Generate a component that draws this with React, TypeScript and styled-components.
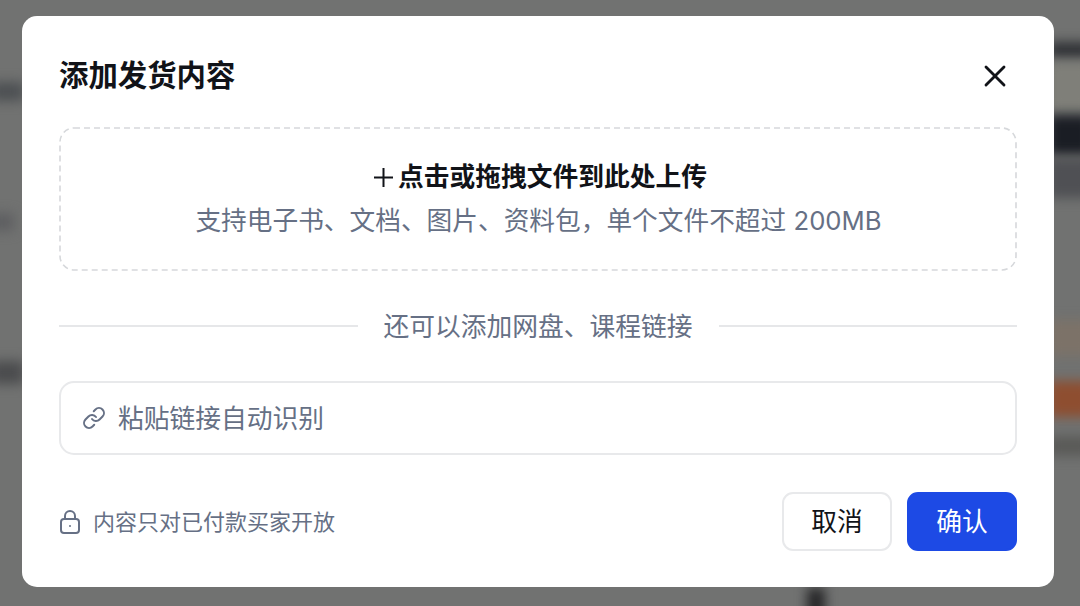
import React from "react";
import styled, { createGlobalStyle } from "styled-components";
import { Link, X } from "lucide-react";

const GlobalStyle = createGlobalStyle`
  html, body {
    margin: 0;
    padding: 0;
    height: 100%;
    overflow: hidden;
  }
  body {
    font-family: "Inter", "Noto Sans CJK SC", sans-serif;
  }
`;

const Page = styled.div`
  position: relative;
  width: 1080px;
  height: 606px;
  box-sizing: border-box;
  padding: 16px 26px 19px 22px;
  background: #717271;
  overflow: hidden;
`;

// blurred page behind the dialog
const Blob = styled.div<{ $x: number; $y: number; $w: number; $h: number; $c: string }>`
  position: absolute;
  left: ${(p) => p.$x}px;
  top: ${(p) => p.$y}px;
  width: ${(p) => p.$w}px;
  height: ${(p) => p.$h}px;
  background: ${(p) => p.$c};
  filter: blur(6px);
`;

const Modal = styled.div`
  position: relative;
  box-sizing: border-box;
  height: 571px;
  padding: 0 37px;
  background: #fff;
  border-radius: 15px;
  display: flex;
  flex-direction: column;
`;

const Header = styled.div`
  height: 111px;
  padding-top: 9px;
  box-sizing: border-box;
  display: flex;
  align-items: center;
  justify-content: space-between;
`;

const Title = styled.h2`
  margin: 0;
  font-size: 29.4px;
  line-height: 40px;
  font-weight: 600;
  color: #111318;
`;

const CloseButton = styled.button`
  display: flex;
  padding: 0;
  margin-right: 4px;
  border: none;
  background: none;
  color: #111318;
`;

const DropZone = styled.div`
  position: relative;
  box-sizing: border-box;
  height: 144px;
  display: flex;
  flex-direction: column;
  align-items: center;
  justify-content: center;
  gap: 8px;
`;

const DashedEdge = styled.svg`
  position: absolute;
  inset: 0;
  width: 100%;
  height: 100%;
`;

const DropTitle = styled.div`
  display: flex;
  align-items: center;
  gap: 4px;
  padding-left: 4px;
  font-size: 25.75px;
  line-height: 36px;
  font-weight: 600;
  color: #111318;
`;

const Hint = styled.div`
  padding-left: 1px;
  font-size: 25.7px;
  line-height: 36px;
  color: #667085;
`;

const Divider = styled.div`
  height: 110px;
  display: flex;
  align-items: center;
  gap: 26px;
  font-size: 25.75px;
  color: #667085;

  &::before,
  &::after {
    content: "";
    flex: 1;
    height: 2px;
    background: #e6e7e9;
  }
`;

const DividerText = styled.span`
  margin-top: -4px;
`;

const LinkInput = styled.div`
  box-sizing: border-box;
  height: 74px;
  padding: 0 0 4px 21px;
  border: 2px solid #e8e9eb;
  border-radius: 15px;
  display: flex;
  align-items: center;
  gap: 12px;
  font-size: 25.75px;
  color: #667085;
`;

const LinkIcon = styled(Link)`
  margin-top: 4px;
`;

const Footer = styled.div`
  margin-top: 37px;
  display: flex;
  align-items: center;
  justify-content: space-between;
`;

const Notice = styled.div`
  display: flex;
  align-items: center;
  gap: 13px;
  padding-left: 1px;
  font-size: 22px;
  line-height: 30px;
  color: #667085;

  span {
    margin-top: 1px;
  }
`;

const Actions = styled.div`
  display: flex;
  gap: 15px;
`;

const Button = styled.button<{ $primary?: boolean }>`
  box-sizing: border-box;
  width: 110px;
  height: 59px;
  padding: 0 0 4px;
  border-radius: 11px;
  border: 2px solid ${(p) => (p.$primary ? "#1d4ae5" : "#e8e9eb")};
  background: ${(p) => (p.$primary ? "#1d4ae5" : "#fff")};
  color: ${(p) => (p.$primary ? "#fff" : "#111318")};
  font-family: inherit;
  font-size: 25.75px;
`;

const blobs = [
  { x: -10, y: 82, w: 34, h: 19, c: "#4d5053" },
  { x: -10, y: 213, w: 24, h: 18, c: "#5e5f61" },
  { x: -10, y: 361, w: 34, h: 23, c: "#4b4c4e" },
  { x: 1048, y: 42, w: 44, h: 16, c: "#2f3135" },
  { x: 1048, y: 62, w: 44, h: 50, c: "#7f7f79" },
  { x: 1048, y: 115, w: 44, h: 40, c: "#1a1d24" },
  { x: 1048, y: 158, w: 44, h: 40, c: "#4f5054" },
  { x: 1048, y: 320, w: 44, h: 36, c: "#7c7268" },
  { x: 1048, y: 381, w: 44, h: 36, c: "#8e4e30" },
  { x: 1048, y: 436, w: 44, h: 20, c: "#5a5a58" },
  { x: 807, y: 588, w: 18, h: 32, c: "#262628" },
];

const App = () => {
  return (
    <Page>
      <GlobalStyle />
      {blobs.map((b) => (
        <Blob key={`${b.x}-${b.y}`} $x={b.x} $y={b.y} $w={b.w} $h={b.h} $c={b.c} />
      ))}
      <Modal>
        <Header>
          <Title>添加发货内容</Title>
          <CloseButton>
            <X size={36} strokeWidth={1.9} />
          </CloseButton>
        </Header>
        <DropZone>
          <DashedEdge viewBox="0 0 958 144" fill="none">
            <rect x="1" y="1" width="956" height="142" rx="14" stroke="#d6d8db" strokeWidth="1.6" strokeDasharray="6 4" />
          </DashedEdge>
          <DropTitle>
            <svg width="21" height="21" viewBox="0 0 21 21" fill="none" stroke="#111318" strokeWidth="2">
              <path d="M10.5 1v19M1 10.5h19" />
            </svg>
            点击或拖拽文件到此处上传
          </DropTitle>
          <Hint>支持电子书、文档、图片、资料包，单个文件不超过 200MB</Hint>
        </DropZone>
        <Divider>
          <DividerText>还可以添加网盘、课程链接</DividerText>
        </Divider>
        <LinkInput>
          <LinkIcon size={24} strokeWidth={2} />
          粘贴链接自动识别
        </LinkInput>
        <Footer>
          <Notice>
            <svg width="20" height="24" viewBox="0 0 20 24" fill="none" stroke="#667085" strokeWidth="2">
              <rect x="1" y="9" width="18" height="14" rx="3" />
              <path d="M5 9V6a5 5 0 0 1 10 0v3" />
              <circle cx="10" cy="16" r="1" fill="#667085" stroke="none" />
            </svg>
            <span>内容只对已付款买家开放</span>
          </Notice>
          <Actions>
            <Button>取消</Button>
            <Button $primary>确认</Button>
          </Actions>
        </Footer>
      </Modal>
    </Page>
  );
};

export default App;
